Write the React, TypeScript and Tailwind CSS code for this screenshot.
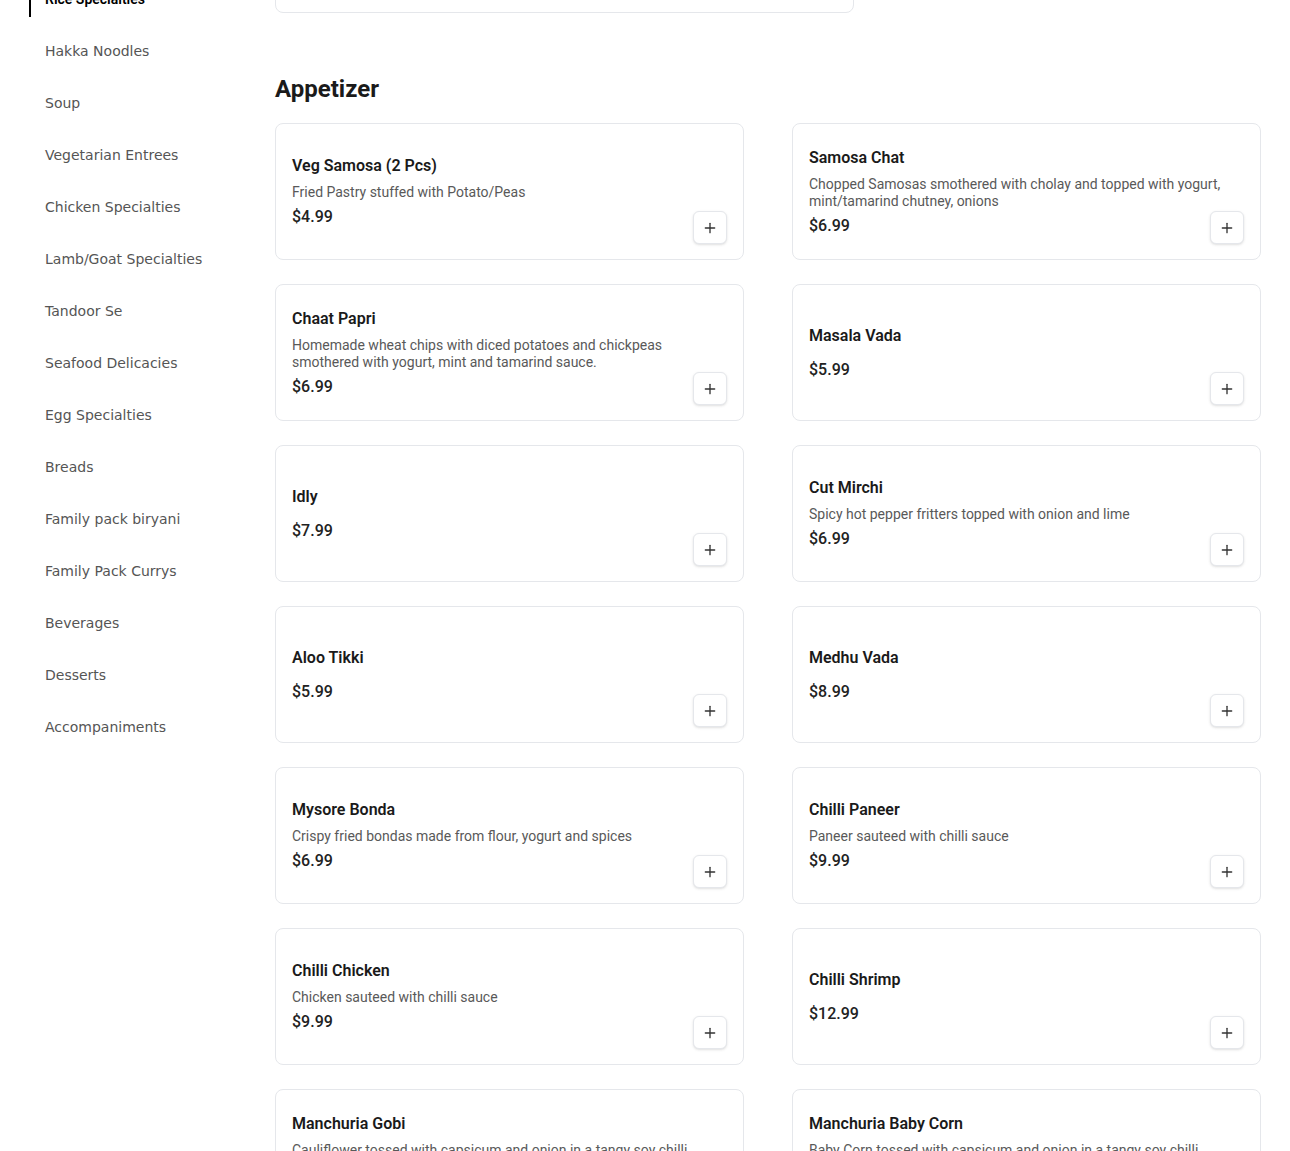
import { Plus } from "lucide-react";

type Item = {
  name: string;
  desc?: string;
  price: string;
};

const categories = [
  "Rice Specialties",
  "Hakka Noodles",
  "Soup",
  "Vegetarian Entrees",
  "Chicken Specialties",
  "Lamb/Goat Specialties",
  "Tandoor Se",
  "Seafood Delicacies",
  "Egg Specialties",
  "Breads",
  "Family pack biryani",
  "Family Pack Currys",
  "Beverages",
  "Desserts",
  "Accompaniments",
];

const appetizers: Item[] = [
  { name: "Veg Samosa (2 Pcs)", desc: "Fried Pastry stuffed with Potato/Peas", price: "$4.99" },
  {
    name: "Samosa Chat",
    desc: "Chopped Samosas smothered with cholay and topped with yogurt, mint/tamarind chutney, onions",
    price: "$6.99",
  },
  {
    name: "Chaat Papri",
    desc: "Homemade wheat chips with diced potatoes and chickpeas smothered with yogurt, mint and tamarind sauce.",
    price: "$6.99",
  },
  { name: "Masala Vada", price: "$5.99" },
  { name: "Idly", price: "$7.99" },
  { name: "Cut Mirchi", desc: "Spicy hot pepper fritters topped with onion and lime", price: "$6.99" },
  { name: "Aloo Tikki", price: "$5.99" },
  { name: "Medhu Vada", price: "$8.99" },
  { name: "Mysore Bonda", desc: "Crispy fried bondas made from flour, yogurt and spices", price: "$6.99" },
  { name: "Chilli Paneer", desc: "Paneer sauteed with chilli sauce", price: "$9.99" },
  { name: "Chilli Chicken", desc: "Chicken sauteed with chilli sauce", price: "$9.99" },
  { name: "Chilli Shrimp", price: "$12.99" },
  {
    name: "Manchuria Gobi",
    desc: "Cauliflower tossed with capsicum and onion in a tangy soy chilli sauce",
    price: "$9.99",
  },
  {
    name: "Manchuria Baby Corn",
    desc: "Baby Corn tossed with capsicum and onion in a tangy soy chilli sauce",
    price: "$9.99",
  },
];

function MenuCard({ item }: { item: Item }) {
  return (
    <div className="relative h-[137px] rounded-lg border border-gray-200 bg-white px-4 flex flex-col justify-center">
      <h3 className="text-base leading-6 font-semibold text-[#1a1a1a]">{item.name}</h3>
      {item.desc && (
        <p className="mt-1.5 pr-3 text-sm leading-[17px] text-[#595959]">{item.desc}</p>
      )}
      <p className={`${item.desc ? "mt-1" : "mt-2.5"} text-base leading-6 font-medium text-[#222]`}>
        {item.price}
      </p>
      {/* add to cart */}
      <button className="absolute right-4 bottom-[15px] flex h-[33px] w-[34px] items-center justify-center rounded-md border border-gray-200 bg-white shadow-sm text-[#333]">
        <Plus size={16} strokeWidth={2} />
      </button>
    </div>
  );
}

export default function App() {
  return (
    <div className="h-[1151px] overflow-hidden bg-white font-['Roboto',sans-serif]">
      <div className="flex">
        {/* Category nav */}
        <aside className="w-[275px] shrink-0 pl-[29px]">
          <ul className="-mt-[19px] flex flex-col gap-4">
            {categories.map((c, i) => (
              <li
                key={c}
                className={`h-9 flex items-center border-l-2 pl-[14px] text-sm ${
                  i === 0
                    ? "border-black font-semibold text-black"
                    : "border-transparent font-['DejaVu_Sans',sans-serif] text-[#555]"
                }`}
              >
                {c}
              </li>
            ))}
          </ul>
        </aside>

        {/* Menu sections */}
        <main className="flex-1 pr-[29px]">
          <div className="-mt-[47px] h-[60px] w-[579px] rounded-lg border border-gray-200" />

          <section className="mt-[58px]">
            <h2 className="mb-4 text-2xl leading-9 font-bold text-[#1a1a1a]">Appetizer</h2>
            <div className="grid grid-cols-2 gap-x-12 gap-y-6">
              {appetizers.map((item) => (
                <MenuCard key={item.name} item={item} />
              ))}
            </div>
          </section>
        </main>
      </div>
    </div>
  );
}
